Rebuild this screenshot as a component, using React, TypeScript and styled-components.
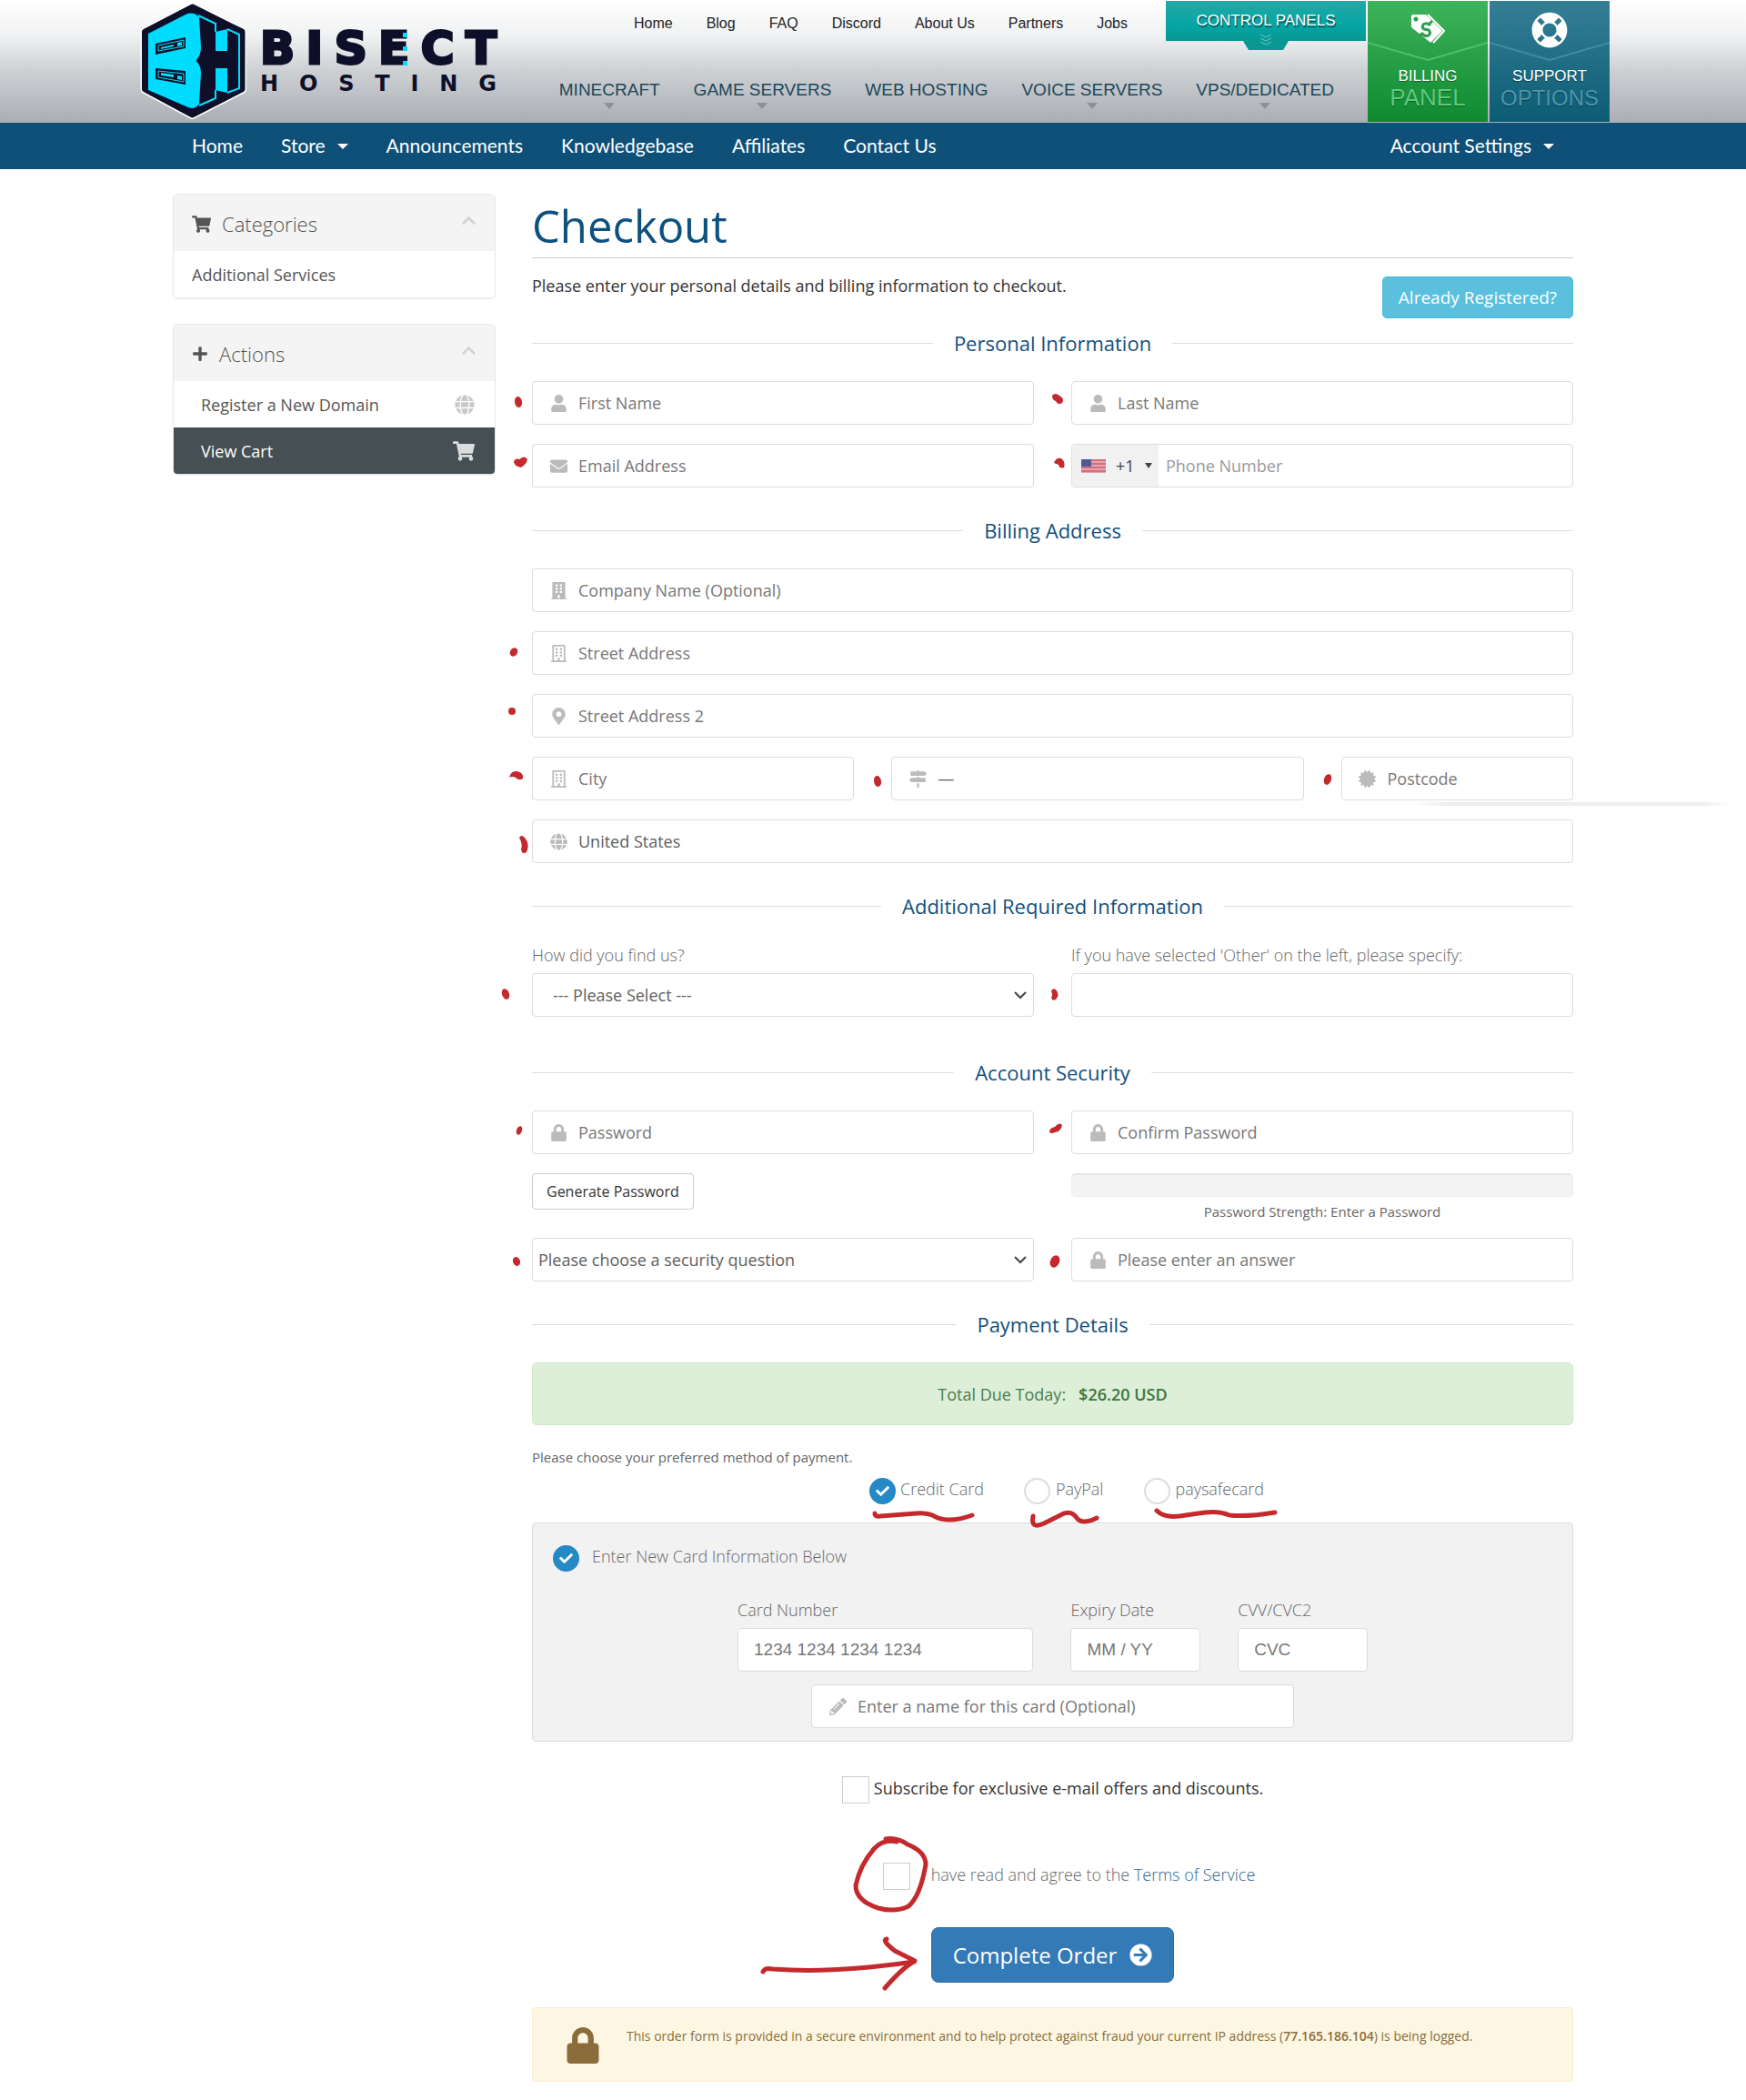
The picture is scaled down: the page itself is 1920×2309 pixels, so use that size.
import React from "react";
import styled, { createGlobalStyle } from "styled-components";
import type { IconType } from "react-icons";
import {
  FaArrowCircleRight,
  FaBuilding,
  FaCertificate,
  FaCheck,
  FaChevronUp,
  FaEnvelope,
  FaGlobe,
  FaLifeRing,
  FaLock,
  FaMapMarkerAlt,
  FaMapSigns,
  FaPencilAlt,
  FaPlus,
  FaRegBuilding,
  FaShoppingCart,
  FaUser,
} from "react-icons/fa";

const sans = `"Open Sans", "Noto Sans", sans-serif`;
const arial = `"Liberation Sans", Arial, sans-serif`;

const GlobalStyle = createGlobalStyle`
  *, *::before, *::after { box-sizing: border-box; }
  body {
    margin: 0;
    background: #fff;
    color: #333;
    font-family: ${sans};
    font-size: 18px;
    line-height: 24px;
  }
  a { color: inherit; text-decoration: none; }
  ul { list-style: none; margin: 0; padding: 0; }
  button, input, select { font-family: inherit; margin: 0; }
`;

const Page = styled.div`
  position: relative;
`;

/* ---------- site header ---------- */

const SiteHeader = styled.header`
  background: linear-gradient(#ffffff 0%, #f1f2f3 28%, #cdd0d3 58%, #aaadb3 100%);
`;

const HeaderInner = styled.div`
  display: flex;
  height: 135px;
  max-width: 1620px;
  margin: 0 auto;
  padding-left: 4px;
`;

const Brand = styled.a`
  display: flex;
  gap: 14px;
  padding-top: 2px;
  color: #0d1028;
  font-family: "DejaVu Sans", sans-serif;
  font-weight: 700;
`;

const Wordmark = styled.span`
  display: flex;
  flex-direction: column;
  width: 260px;
  padding-top: 27px;
`;

const WordTop = styled.span`
  display: flex;
  justify-content: space-between;
  font-size: 50px;
  line-height: 48px;
  -webkit-text-stroke: 3px #0d1028;
`;

const WordBottom = styled.span`
  display: flex;
  justify-content: space-between;
  font-size: 24px;
  line-height: 28px;
  padding-top: 1px;
`;

const LetterE = styled.span`
  position: relative;

  svg {
    position: absolute;
    right: 1px;
    top: 4px;
  }
`;

const HeaderMenus = styled.div`
  flex: 1;
  display: flex;
  flex-direction: column;
  align-items: flex-end;
`;

const MenuRow = styled.div`
  display: flex;
  gap: 42px;
  height: 55px;
  padding-top: 1px;
`;

const TopLinks = styled.ul`
  display: flex;
  gap: 37px;
  font: 16px/50px ${arial};
  color: #222;
`;

const ControlPanels = styled.a`
  display: flex;
  flex-direction: column;
  align-items: center;
  align-self: flex-start;
  width: 220px;
  height: 44px;
  background: linear-gradient(#25a8a5, #05a6a5 60%, #089793);
  color: #fff;
  font: 17px/44px ${arial};
  text-shadow: 1px 2px 1px rgba(0, 60, 60, 0.8);

  svg {
    flex: none;
    margin-top: -9px;
  }
`;

const MainNav = styled.ul`
  display: flex;
  gap: 37px;
  padding: 32px 35px 0 0;
  color: #1b4859;
  font: 19px/24px ${arial};
`;

const MainNavItem = styled.li<{ $menu?: boolean }>`
  display: flex;
  flex-direction: column;
  align-items: center;

  &::after {
    content: "";
    display: ${(p) => (p.$menu ? "block" : "none")};
    margin-top: 2px;
    border: 6px solid transparent;
    border-top: 7px solid #8e9296;
    border-bottom: 0;
  }
`;

const Tile = styled.a<{ $from: string; $to: string; $line: string; $second: string; $size: number }>`
  display: flex;
  flex-direction: column;
  align-items: center;
  width: 132px;
  height: 133px;
  margin: 1px 0 0 2px;
  background: linear-gradient(${(p) => p.$from}, ${(p) => p.$to});
  color: #fff;
  font: 17px/20px ${arial};
  text-shadow: 0 1px 1px rgba(0, 0, 0, 0.4);

  strong {
    font-weight: 400;
    font-size: ${(p) => p.$size}px;
    line-height: 27px;
    color: ${(p) => p.$second};
  }
  > svg:first-child {
    margin-top: 12px;
    height: 40px;
  }
  > svg:nth-child(2) {
    stroke: ${(p) => p.$line};
    margin-top: -7px;
    margin-bottom: 6px;
  }
`;

/* ---------- blue bar ---------- */

const Bar = styled.nav`
  background: #0f5079;
  color: #fff;
  font-family: Lato, ${sans};
  font-size: 21px;
`;

const BarInner = styled.ul`
  display: flex;
  gap: 42px;
  max-width: 1540px;
  margin: 0 auto;
  padding: 0 21px 2px;
  line-height: 49px;
`;

const BarItem = styled.li<{ $caret?: boolean; $last?: boolean }>`
  display: flex;
  align-items: center;
  gap: 13px;
  margin-left: ${(p) => (p.$last ? "auto" : "0")};

  &::after {
    content: "";
    display: ${(p) => (p.$caret ? "block" : "none")};
    margin-top: 2px;
    border: 6px solid transparent;
    border-top-color: #fff;
    border-bottom: 0;
  }
`;

/* ---------- layout ---------- */

const Columns = styled.div`
  display: grid;
  grid-template-columns: 355px minmax(0, 1fr);
  gap: 40px;
  max-width: 1540px;
  margin: 0 auto;
  padding: 27px 0 18px;
`;

const Sidebar = styled.aside`
  display: flex;
  flex-direction: column;
  gap: 28px;
`;

const Panel = styled.section`
  border: 1px solid #e8e8e8;
  border-radius: 5px;
  overflow: hidden;
  box-shadow: 0 1px 2px rgba(0, 0, 0, 0.06);
`;

const PanelHead = styled.h2`
  display: flex;
  align-items: center;
  gap: 12px;
  height: 62px;
  margin: 0;
  padding: 2px 20px 0;
  background: #f4f4f4;
  color: #555;
  font-size: 22px;
  font-weight: 300;

  svg:last-child {
    margin: -8px 0 0 auto;
    color: #d3d3d3;
  }
`;

const PanelLink = styled.a<{ $active?: boolean; $indent?: boolean }>`
  display: flex;
  align-items: center;
  justify-content: space-between;
  height: 51px;
  padding: 0 22px 0 ${(p) => (p.$indent ? "30px" : "20px")};
  background: ${(p) => (p.$active ? "#464f53" : "#fff")};
  color: ${(p) => (p.$active ? "#fff" : "#555")};

  svg {
    color: ${(p) => (p.$active ? "#d9dcdd" : "#c8c8c8")};
  }
`;

const Title = styled.h1`
  margin: 0;
  padding: 3px 0;
  border-bottom: 1px solid #ccc;
  color: #0c5180;
  font-size: 49px;
  font-weight: 400;
  line-height: 64px;
`;

const Intro = styled.div`
  display: flex;
  justify-content: space-between;
  align-items: flex-start;
  margin-top: 20px;
  line-height: 20px;

  p { margin: 0; }
`;

const InfoButton = styled.button`
  height: 46px;
  padding: 0 17px;
  border: 1px solid #46b8da;
  border-radius: 5px;
  background: #5bc0de;
  color: #fff;
  font-size: 19px;
`;

const SectionHeading = styled.h3<{ $top?: number }>`
  display: flex;
  align-items: center;
  gap: 23px;
  margin: ${(p) => p.$top ?? 33}px 0 28px;
  color: #124f7c;
  font-size: 22px;
  font-weight: 400;
  line-height: 28px;

  &::before,
  &::after {
    content: "";
    flex: 1;
    height: 1px;
    background: #ddd;
  }
`;

const Grid = styled.div`
  display: grid;
  grid-template-columns: repeat(12, minmax(0, 1fr));
  gap: 21px 41px;
`;

const Cell = styled.div<{ $span: number }>`
  grid-column: span ${(p) => p.$span};
`;

const FieldBox = styled.div`
  display: flex;
  align-items: center;
  height: 48px;
  border: 1px solid #dcdcdc;
  border-radius: 4px;
  background: #fff;
  overflow: hidden;
`;

const IconLabel = styled.label`
  flex: none;
  display: grid;
  place-items: center;
  width: 22px;
  margin: 0 6px 0 17px;
  color: #bbb;
`;

const BareInput = styled.input<{ $pad?: number; $arial?: boolean; $pale?: boolean }>`
  flex: 1;
  min-width: 0;
  height: 100%;
  padding: 0 5px 0 ${(p) => p.$pad ?? 5}px;
  border: 0;
  outline: 0;
  background: transparent;
  color: #555;
  font-family: ${(p) => (p.$arial ? arial : "inherit")};
  font-size: ${(p) => (p.$arial ? 19 : 18)}px;

  &::placeholder {
    color: ${(p) => (p.$pale ? "#999" : "#777")};
    opacity: 1;
  }
`;

const BareSelect = styled.select<{ $pad?: number }>`
  flex: 1;
  min-width: 0;
  height: 100%;
  padding: 0 5px 0 ${(p) => p.$pad ?? 5}px;
  border: 0;
  outline: 0;
  appearance: none;
  background: transparent;
  color: #606060;
  font-size: 18px;
`;

const SelectArrow = styled.svg`
  flex: none;
  margin-right: 7px;
`;

const FieldLabel = styled.label`
  display: block;
  margin-bottom: 8px;
  color: #666;
  font-weight: 300;
  line-height: 24px;
`;

const DialSelect = styled.button`
  display: flex;
  align-items: center;
  gap: 11px;
  height: 100%;
  width: 95px;
  padding: 0 7px 0 10px;
  border: 0;
  background: #f1f1f1;
  color: #444;
  font-size: 18px;

  &::after {
    content: "";
    border: 4px solid transparent;
    border-top: 6px solid #444;
    border-bottom: 0;
  }
`;

const SmallButton = styled.button`
  height: 40px;
  padding: 0 15px;
  border: 1px solid #ccc;
  border-radius: 4px;
  background: #fff;
  color: #333;
  font-size: 16px;
`;

const Meter = styled.div`
  height: 26px;
  border: 1px solid #ececec;
  border-top: 2px solid #e4e4e4;
  border-radius: 5px;
  background: #f4f4f4;
`;

const MeterText = styled.p`
  margin: 6px 0 -2px;
  color: #666;
  font-size: 15px;
  line-height: 20px;
  text-align: center;
`;

const Total = styled.div`
  display: flex;
  justify-content: center;
  align-items: center;
  gap: 14px;
  height: 69px;
  border: 1px solid #d2e8c8;
  border-radius: 5px;
  background: #deefd9;
  color: #4b7b4c;

  strong {
    font-weight: 600;
    color: #3c763d;
  }
`;

const MethodHint = styled.p`
  margin: 25px 0 12px;
  color: #666;
  font-size: 15px;
  line-height: 20px;
`;

const Methods = styled.div`
  display: flex;
  justify-content: center;
  gap: 44px;
  margin-bottom: 20px;
  padding-left: 30px;
`;

const Choice = styled.label<{ $gap?: number }>`
  display: flex;
  align-items: flex-start;
  gap: ${(p) => p.$gap ?? 5}px;
  color: #666;
  font-weight: 300;
  line-height: 27px;
`;

const RadioShell = styled.span`
  display: grid;
  place-items: center;
  width: 30px;
  height: 30px;

  > * { grid-area: 1 / 1; }

  svg {
    z-index: 1;
    color: #fff;
    pointer-events: none;
  }
`;

const Radio = styled.input`
  appearance: none;
  width: 29px;
  height: 29px;
  border: 2px solid #ddd;
  border-radius: 50%;
  background: #fff;

  &:checked {
    border-color: #2489c5;
    background: #2489c5;
  }
`;

const CardBox = styled.div`
  padding: 23px 21px 14px;
  border: 1px solid #dcdcdc;
  border-radius: 4px;
  background: #f2f2f2;
`;

const CardRow = styled.div`
  display: grid;
  grid-template-columns: minmax(0, 326fr) minmax(0, 143fr) minmax(0, 143fr);
  gap: 41px;
  max-width: 693px;
  margin: 30px auto 14px;
`;

const CardName = styled.div`
  max-width: 531px;
  margin: 0 auto;
`;

const CheckRow = styled.label<{ $top: number; $gap: number; $shift?: number; $light?: boolean }>`
  display: flex;
  justify-content: center;
  align-items: flex-start;
  gap: ${(p) => p.$gap}px;
  margin-top: ${(p) => p.$top}px;
  padding-left: ${(p) => p.$shift ?? 0}px;
  line-height: 27px;
  font-weight: ${(p) => (p.$light ? 300 : 400)};
  color: ${(p) => (p.$light ? "#666" : "#333")};

  a { color: #2a6592; }
`;

const CheckBox = styled.input`
  appearance: none;
  width: 30px;
  height: 30px;
  border: 1px solid #ccc;
  background: #fff;
`;

const SubmitRow = styled.div`
  display: flex;
  justify-content: center;
  margin: 41px 0 27px;
`;

const SubmitButton = styled.button`
  display: flex;
  align-items: center;
  gap: 14px;
  height: 61px;
  padding: 0 23px;
  border: 1px solid #2e6da4;
  border-radius: 8px;
  background: #337ab7;
  color: #fff;
  font-size: 24px;
`;

const Warning = styled.div`
  display: flex;
  align-items: flex-start;
  gap: 28px;
  height: 82px;
  padding: 21px 35px;
  border: 1px solid #faebcc;
  border-radius: 4px;
  background: #fdf6e2;
  color: #8a6d3b;
  font-size: 14px;
  line-height: 20px;

  p { margin: 0; }
  strong { font-weight: 600; }
`;

const Ink = styled.svg`
  position: absolute;
  top: 0;
  left: 0;
  width: 100%;
  pointer-events: none;
`;

/* ---------- pieces ---------- */

function HexLogo() {
  return (
    <svg width="118" height="130" viewBox="153 2 118 130" aria-hidden="true">
      <path
        d="M210.500 8 265 35V98L210.500 126 158.500 98V35Z"
        fill="#fff"
        stroke="#fff"
        strokeWidth="10"
        strokeLinejoin="round"
      />
      <path
        d="M210.500 8 265 35V98L210.500 126 158.500 98V35Z"
        fill="#0d1028"
        stroke="#0d1028"
        strokeWidth="7"
        strokeLinejoin="round"
      />
      <path
        d="M162 37 203 16Q212 12 218 19L220 52Q220 60 214.500 67 220 72 220 80L218 114Q214 121 206 118L162 99Z"
        fill="#00dcff"
      />
      <path d="M236 35 249 32V56H236ZM236 75H249V102L236 99Z" fill="#00dcff" />
      <path
        d="M217 17 236 26V35M236 99V108L218 116M249 32 262 38V97L249 102"
        fill="none"
        stroke="#00dcff"
        strokeWidth="2"
      />
      <path d="M170 48 203 41V53L170 60ZM170 75 203 78V93L170 87Z" fill="#0d1028" />
      <path
        d="M173 50 201 44V51L173 56ZM173 78 201 81V90L173 85Z"
        fill="none"
        stroke="#00dcff"
        strokeWidth="1"
      />
      <path d="M176 52 190 49V51L176 54ZM176 80 190 82V85L176 83ZM194 47 199 46V50L194 51ZM194 83 199 84V88L194 87Z" fill="#00dcff" />
    </svg>
  );
}

function TagIcon() {
  return (
    <svg width="38" height="40" viewBox="0 0 38 40" aria-hidden="true">
      <path d="M1 5Q1 3 3 3H17L34 20Q35 21 34 22L23 33Q22 34 21 33L1 17Z" fill="#fff" />
      <path d="M19 3 37 21 25 34" fill="none" stroke="#fff" strokeWidth="2" />
      <circle cx="6" cy="8" r="2.500" fill="#2f9f4e" />
      <path
        d="M22 15Q18 11 14 14 12 17 15 19L20 20Q23 23 20 26 16 28 12 23M21 13 24 10M10 26 13 24"
        fill="none"
        stroke="#2f9f4e"
        strokeWidth="3"
      />
    </svg>
  );
}

function Chevron() {
  return (
    <svg width="132" height="22" viewBox="0 0 132 22" fill="none" aria-hidden="true">
      <path d="M0 1 66 20 132 1" strokeWidth="2" />
    </svg>
  );
}

function UsFlag() {
  return (
    <svg width="27" height="15" viewBox="0 0 27 15" aria-hidden="true">
      <rect width="27" height="15" fill="#e9a3ad" />
      {[0, 4, 8, 12].map((y) => (
        <rect key={y} y={y} width="27" height="2" fill="#cf6f80" />
      ))}
      <rect width="11" height="8" fill="#56598f" />
    </svg>
  );
}

function DownArrow() {
  return (
    <SelectArrow width="14" height="10" viewBox="0 0 14 10" aria-hidden="true">
      <path d="M1 2 7 8 13 2" fill="none" stroke="#444" strokeWidth="2" />
    </SelectArrow>
  );
}

type FieldProps = { id: string; text: string; icon: IconType; type?: string };

function IconField({ id, text, icon: Icon, type = "text" }: FieldProps) {
  return (
    <FieldBox>
      <IconLabel htmlFor={id}>
        <Icon size={19} />
      </IconLabel>
      <BareInput id={id} type={type} placeholder={text} aria-label={text} />
    </FieldBox>
  );
}

type IconSelectProps = { id: string; name: string; option: string; icon: IconType };

function IconSelect({ id, name, option, icon: Icon }: IconSelectProps) {
  return (
    <FieldBox>
      <IconLabel htmlFor={id}>
        <Icon size={19} />
      </IconLabel>
      <BareSelect id={id} aria-label={name}>
        <option>{option}</option>
      </BareSelect>
    </FieldBox>
  );
}

type RadioProps = { name: string; label: string; checked?: boolean; gap?: number };

function RadioChoice({ name, label, checked, gap }: RadioProps) {
  return (
    <Choice $gap={gap}>
      <RadioShell>
        <Radio type="radio" name={name} defaultChecked={checked} />
        {checked && <FaCheck size={15} />}
      </RadioShell>
      {label}
    </Choice>
  );
}

const dots: [number, number, number, number, number][] = [
  [570, 442, 4, 6, -10],
  [565, 717, 4, 5, 35],
  [563, 782, 4, 4, 0],
  [965, 859, 4, 6, -10],
  [1460, 857, 4, 6, 20],
  [556, 1093, 4, 6, -20],
  [571, 1243, 3, 5, 20],
  [568, 1387, 4, 5, -20],
  [1160, 1387, 5, 7, 25],
];

function InkMarks() {
  return (
    <Ink viewBox="0 0 1920 2309" aria-hidden="true">
      <defs>
        <linearGradient id="edge">
          <stop offset="0" stopColor="#eee" stopOpacity="0" />
          <stop offset="0.1" stopColor="#eee" />
          <stop offset="0.9" stopColor="#eee" />
          <stop offset="1" stopColor="#eee" stopOpacity="0" />
        </linearGradient>
      </defs>
      <rect x="1555" y="882" width="350" height="4" fill="url(#edge)" />
      <g fill="#c4292d">
        {dots.map(([x, y, rx, ry, turn]) => (
          <ellipse key={`${x}-${y}`} cx={x} cy={y} rx={rx} ry={ry} transform={`rotate(${turn} ${x} ${y})`} />
        ))}
        <path d="M565 508Q566 503 571 505 577 500 580 505 579 511 573 514 566 513 565 508Z" />
        <path d="M1157 435Q1160 431 1165 435 1171 438 1168 443 1163 446 1161 441 1157 440 1157 435Z" />
        <path d="M1159 509Q1161 503 1167 504 1172 508 1170 514 1165 516 1164 511Z" />
        <path d="M560 855Q562 847 568 848 576 849 575 856 571 859 567 855 563 853 560 855Z" />
        <path d="M571 921Q573 917 577 921 583 928 579 937 574 940 573 934 575 928 571 921Z" />
        <path d="M1156 1090Q1157 1086 1161 1088 1166 1094 1161 1099 1157 1101 1156 1097 1158 1094 1156 1090Z" />
        <path d="M1154 1245Q1154 1240 1160 1239 1165 1233 1168 1237 1167 1244 1160 1245 1156 1247 1154 1245Z" />
      </g>
      <g fill="none" stroke="#c4292d" strokeWidth="5" strokeLinecap="round" strokeLinejoin="round">
        <path d="M962 1664Q962 1668 968 1667L1008 1664Q1022 1663 1029 1668 1044 1675 1069 1666" />
        <path d="M1136 1667Q1133 1682 1148 1675L1170 1664Q1179 1661 1184 1669 1190 1677 1206 1669" />
        <path d="M1272 1661Q1280 1669 1297 1667L1325 1663Q1340 1661 1352 1666 1372 1668 1402 1663" />
        <path d="M974 2022Q986 2020 998 2028 1018 2036 1018 2050 1012 2085 999 2096 984 2103 966 2098 941 2090 941 2073 946 2050 961 2033 971 2022 986 2025" />
        <path d="M839 2168Q841 2163 850 2165 916 2170 1005 2157" />
        <path d="M975 2132Q969 2133 984 2145 996 2151 1006 2156 992 2164 973 2186" />
      </g>
    </Ink>
  );
}

/* ---------- page ---------- */

const topLinks = ["Home", "Blog", "FAQ", "Discord", "About Us", "Partners", "Jobs"];
const services = [
  { name: "MINECRAFT", menu: true },
  { name: "GAME SERVERS", menu: true },
  { name: "WEB HOSTING", menu: false },
  { name: "VOICE SERVERS", menu: true },
  { name: "VPS/DEDICATED", menu: true },
];
const barLinks = ["Home", "Store", "Announcements", "Knowledgebase", "Affiliates", "Contact Us"];

export default function App() {
  return (
    <Page>
      <GlobalStyle />
      <SiteHeader>
        <HeaderInner>
          <Brand href="#" aria-label="Bisect Hosting">
            <HexLogo />
            <Wordmark>
              <WordTop>
                <span>B</span>
                <span>I</span>
                <span>S</span>
                <LetterE>
                  E
                  <svg width="6" height="40" viewBox="0 0 6 40" aria-hidden="true">
                    <path d="M0 3H5V8H0ZM0 18H5V23H0ZM0 34H5V39H0Z" fill="#00dcff" />
                  </svg>
                </LetterE>
                <span>C</span>
                <span>T</span>
              </WordTop>
              <WordBottom>
                {"HOSTING".split("").map((c) => (
                  <span key={c}>{c}</span>
                ))}
              </WordBottom>
            </Wordmark>
          </Brand>
          <HeaderMenus>
            <MenuRow>
              <TopLinks>
                {topLinks.map((t) => (
                  <li key={t}>
                    <a href="#">{t}</a>
                  </li>
                ))}
              </TopLinks>
              <ControlPanels href="#">
                CONTROL PANELS
                <svg width="50" height="19" viewBox="0 0 50 19" aria-hidden="true">
                  <path d="M0 9H50L44 19H6Z" fill="#089793" />
                  <path d="M19 2 25 5 31 2M19 6 25 9 31 6M19 10 25 13 31 10" fill="none" stroke="#6cc9c6" strokeWidth="1" />
                </svg>
              </ControlPanels>
            </MenuRow>
            <MainNav>
              {services.map((s) => (
                <MainNavItem key={s.name} $menu={s.menu}>
                  <a href="#">{s.name}</a>
                </MainNavItem>
              ))}
            </MainNav>
          </HeaderMenus>
          <Tile href="#" $from="#3eb35a" $to="#0e8a31" $line="#4fc06c" $second="#5fca7d" $size={26}>
            <TagIcon />
            <Chevron />
            BILLING
            <strong>PANEL</strong>
          </Tile>
          <Tile href="#" $from="#357f95" $to="#0b5c74" $line="#3f8ba3" $second="#4c96ad" $size={24}>
            <FaLifeRing size={40} />
            <Chevron />
            SUPPORT
            <strong>OPTIONS</strong>
          </Tile>
        </HeaderInner>
      </SiteHeader>

      <Bar>
        <BarInner>
          {barLinks.map((t) => (
            <BarItem key={t} $caret={t === "Store"}>
              <a href="#">{t}</a>
            </BarItem>
          ))}
          <BarItem $caret $last>
            <a href="#">Account Settings</a>
          </BarItem>
        </BarInner>
      </Bar>

      <Columns>
        <Sidebar>
          <Panel>
            <PanelHead>
              <FaShoppingCart size={21} />
              Categories
              <FaChevronUp size={17} />
            </PanelHead>
            <PanelLink href="#">Additional Services</PanelLink>
          </Panel>
          <Panel>
            <PanelHead>
              <FaPlus size={18} />
              Actions
              <FaChevronUp size={17} />
            </PanelHead>
            <PanelLink href="#" $indent>
              Register a New Domain
              <FaGlobe size={22} />
            </PanelLink>
            <PanelLink href="#" $indent $active>
              View Cart
              <FaShoppingCart size={24} />
            </PanelLink>
          </Panel>
        </Sidebar>

        <main>
          <Title>Checkout</Title>
          <Intro>
            <p>Please enter your personal details and billing information to checkout.</p>
            <InfoButton type="button">Already Registered?</InfoButton>
          </Intro>

          <form onSubmit={(e) => e.preventDefault()}>
            <SectionHeading $top={13}>Personal Information</SectionHeading>
            <Grid>
              <Cell $span={6}>
                <IconField id="first" text="First Name" icon={FaUser} />
              </Cell>
              <Cell $span={6}>
                <IconField id="last" text="Last Name" icon={FaUser} />
              </Cell>
              <Cell $span={6}>
                <IconField id="email" text="Email Address" icon={FaEnvelope} type="email" />
              </Cell>
              <Cell $span={6}>
                <FieldBox>
                  <DialSelect type="button">
                    <UsFlag />
                    +1
                  </DialSelect>
                  <BareInput type="tel" placeholder="Phone Number" aria-label="Phone Number" $pad={8} $pale />
                </FieldBox>
              </Cell>
            </Grid>

            <SectionHeading>Billing Address</SectionHeading>
            <Grid>
              <Cell $span={12}>
                <IconField id="company" text="Company Name (Optional)" icon={FaBuilding} />
              </Cell>
              <Cell $span={12}>
                <IconField id="street" text="Street Address" icon={FaRegBuilding} />
              </Cell>
              <Cell $span={12}>
                <IconField id="street2" text="Street Address 2" icon={FaMapMarkerAlt} />
              </Cell>
              <Cell $span={4}>
                <IconField id="city" text="City" icon={FaRegBuilding} />
              </Cell>
              <Cell $span={5}>
                <IconSelect id="state" name="State" option="—" icon={FaMapSigns} />
              </Cell>
              <Cell $span={3}>
                <IconField id="postcode" text="Postcode" icon={FaCertificate} />
              </Cell>
              <Cell $span={12}>
                <IconSelect id="country" name="Country" option="United States" icon={FaGlobe} />
              </Cell>
            </Grid>

            <SectionHeading>Additional Required Information</SectionHeading>
            <Grid>
              <Cell $span={6}>
                <FieldLabel htmlFor="found">How did you find us?</FieldLabel>
                <FieldBox>
                  <BareSelect id="found" $pad={22}>
                    <option>--- Please Select ---</option>
                  </BareSelect>
                  <DownArrow />
                </FieldBox>
              </Cell>
              <Cell $span={6}>
                <FieldLabel htmlFor="other">If you have selected 'Other' on the left, please specify:</FieldLabel>
                <FieldBox>
                  <BareInput id="other" type="text" />
                </FieldBox>
              </Cell>
            </Grid>

            <SectionHeading $top={47}>Account Security</SectionHeading>
            <Grid>
              <Cell $span={6}>
                <IconField id="password" text="Password" icon={FaLock} type="password" />
              </Cell>
              <Cell $span={6}>
                <IconField id="confirm" text="Confirm Password" icon={FaLock} type="password" />
              </Cell>
              <Cell $span={6}>
                <SmallButton type="button">Generate Password</SmallButton>
              </Cell>
              <Cell $span={6}>
                <Meter />
                <MeterText>Password Strength: Enter a Password</MeterText>
              </Cell>
              <Cell $span={6}>
                <FieldBox>
                  <BareSelect aria-label="Security question" $pad={6}>
                    <option>Please choose a security question</option>
                  </BareSelect>
                  <DownArrow />
                </FieldBox>
              </Cell>
              <Cell $span={6}>
                <IconField id="answer" text="Please enter an answer" icon={FaLock} />
              </Cell>
            </Grid>

            <SectionHeading>Payment Details</SectionHeading>
            <Total>
              <span>Total Due Today:</span>
              <strong>$26.20 USD</strong>
            </Total>
            <MethodHint>Please choose your preferred method of payment.</MethodHint>
            <Methods>
              <RadioChoice name="method" label="Credit Card" checked />
              <RadioChoice name="method" label="PayPal" />
              <RadioChoice name="method" label="paysafecard" />
            </Methods>

            <CardBox>
              <RadioChoice name="card" label="Enter New Card Information Below" checked gap={14} />
              <CardRow>
                <div>
                  <FieldLabel htmlFor="number">Card Number</FieldLabel>
                  <FieldBox>
                    <BareInput id="number" placeholder="1234 1234 1234 1234" $pad={17} $arial />
                  </FieldBox>
                </div>
                <div>
                  <FieldLabel htmlFor="expiry">Expiry Date</FieldLabel>
                  <FieldBox>
                    <BareInput id="expiry" placeholder="MM / YY" $pad={17} $arial />
                  </FieldBox>
                </div>
                <div>
                  <FieldLabel htmlFor="cvc">CVV/CVC2</FieldLabel>
                  <FieldBox>
                    <BareInput id="cvc" placeholder="CVC" $pad={17} $arial />
                  </FieldBox>
                </div>
              </CardRow>
              <CardName>
                <IconField id="cardname" text="Enter a name for this card (Optional)" icon={FaPencilAlt} />
              </CardName>
            </CardBox>

            <CheckRow $top={38} $gap={5}>
              <CheckBox type="checkbox" />
              Subscribe for exclusive e-mail offers and discounts.
            </CheckRow>
            <CheckRow $top={65} $gap={23} $shift={36} $light>
              <CheckBox type="checkbox" />
              <span>
                have read and agree to the <a href="#">Terms of Service</a>
              </span>
            </CheckRow>
            <SubmitRow>
              <SubmitButton type="submit">
                Complete Order
                <FaArrowCircleRight size={25} />
              </SubmitButton>
            </SubmitRow>
          </form>

          <Warning>
            <FaLock size={40} />
            <p>
              This order form is provided in a secure environment and to help protect against fraud your current IP
              address (<strong>77.165.186.104</strong>) is being logged.
            </p>
          </Warning>
        </main>
      </Columns>
      <InkMarks />
    </Page>
  );
}
